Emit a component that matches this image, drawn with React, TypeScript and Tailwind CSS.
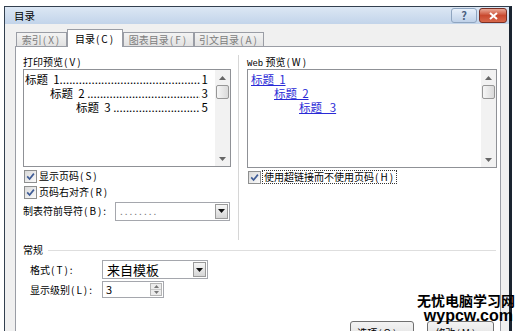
import React from 'react'

const dots = '.'.repeat(90)

const K = ({ k }: { k: string }) => <span className="ml-[1px] tracking-[2px]">({k})</span>

const Check = () => (
  <span className="flex h-[13px] w-[13px] shrink-0 items-center justify-center border border-[#8e8f8f] bg-linear-to-br from-[#d9d9d9] to-[#fbfbfb]">
    <svg width="9" height="9" viewBox="0 0 9 9">
      <path d="M1.2 4.4 L3.6 7 L7.9 1.6" fill="none" stroke="#3f5c96" strokeWidth="1.7" />
    </svg>
  </span>
)

const Arrow = () => (
  <span className="flex h-full w-[13px] shrink-0 items-center justify-center border border-[#9a9a9a] bg-linear-to-b from-[#f6f6f6] to-[#d6d6d6]">
    <svg width="7" height="4" viewBox="0 0 7 4">
      <path d="M0 0h7L3.5 4z" fill="#111" />
    </svg>
  </span>
)

const ScrollBar = () => (
  <div className="flex w-[15px] shrink-0 flex-col items-center bg-[#f2f2f2]">
    <div className="flex h-[15px] items-center justify-center">
      <svg width="7" height="4" viewBox="0 0 7 4">
        <path d="M0 4h7L3.5 0z" fill="#666" />
      </svg>
    </div>
    <div className="h-[14px] w-[13px] rounded-[2px] border border-[#979797] bg-linear-to-r from-[#f6f6f6] to-[#dadada]" />
    <div className="flex-1" />
    <div className="flex h-[15px] items-center justify-center">
      <svg width="7" height="4" viewBox="0 0 7 4">
        <path d="M0 0h7L3.5 4z" fill="#666" />
      </svg>
    </div>
  </div>
)

const Tab = ({ label, k, w }: { label: string; k: string; w: string }) => (
  <div className={`flex h-[14px] items-center justify-center border border-b-0 border-[#9a9da5] bg-linear-to-b from-[#f3f3f3] to-[#e2e2e2] text-[#7d7d7d] ${w}`}>
    {label}
    <K k={k} />
  </div>
)

const Leader = ({ label, n, pad }: { label: string; n: string; pad: string }) => (
  <div className={`flex pr-[7px] ${pad}`}>
    <span className="whitespace-pre">{label}</span>
    <span className="min-w-0 flex-1 overflow-hidden whitespace-nowrap">{dots}</span>
    <span className="pl-[2px]">{n}</span>
  </div>
)

export default function App() {
  return (
    <div className="relative h-[331px] w-[528px] overflow-hidden bg-white pl-[4px] pt-[6px] font-['Noto_Sans_CJK_SC',sans-serif] text-[10px] leading-none text-black">
      <div className="flex h-[330px] w-[508px] flex-col border-l border-t border-r-[3px] border-[#33404f] border-r-[#1a2430] bg-[#f0f0f0]">
        {/* title bar */}
        <div className="flex h-[17px] items-start justify-between bg-linear-to-b from-[#dce7f4] to-[#c2d4ea] pl-[9px] pr-[2px]">
          <span className="text-[10.5px] leading-[17px]">目录</span>
          <div className="mt-[1px] flex gap-[2px]">
            <div className="flex h-[15px] w-[26px] items-center justify-center rounded-[3px] border border-[#8fa5c0] bg-linear-to-b from-[#e8f0fa] to-[#bfd1e8] text-[11px] font-bold text-[#4a6080]">
              ?
            </div>
            <div className="flex h-[15px] w-[28px] items-center justify-center rounded-[3px] border border-[#7a3024] bg-linear-to-b from-[#e9a897] via-[#c9492f] to-[#d8674b]">
              <svg width="9" height="8" viewBox="0 0 9 8">
                <path d="M1 1l7 6M8 1l-7 6" stroke="#fff" strokeWidth="2" />
              </svg>
            </div>
          </div>
        </div>

        <div className="flex-1 pl-[10px] pr-[8px] pt-[5px]">
          {/* tabs */}
          <div className="flex h-[17px] items-end pl-[1px]">
            <Tab label="索引" k="X" w="w-[51px]" />
            <div className="relative z-10 mb-[-1px] flex h-[18px] w-[56px] items-center justify-center border border-b-0 border-[#9a9da5] bg-white">
              目录
              <K k="C" />
            </div>
            <Tab label="图表目录" k="F" w="w-[71px]" />
            <Tab label="引文目录" k="A" w="w-[70px]" />
          </div>

          {/* tab page */}
          <div className="h-[300px] border border-[#9a9da5] bg-white pl-[7px] pr-[2px]">
            <div className="flex h-[193px] pt-[8px]">
              <div className="flex w-[208px] flex-col">
                <div className="h-[14px] leading-[14px]">
                  打印预览
                  <K k="V" />
                </div>
                <div className="flex h-[98px] border border-[#8f9196]">
                  <div className="min-w-0 flex-1 pl-[1px] pt-[2px] text-[11.5px] leading-[14px]">
                    <Leader label="标题  1" n="1" pad="" />
                    <Leader label="标题  2 " n="3" pad="pl-[25px]" />
                    <Leader label="标题  3 " n="5" pad="pl-[51px]" />
                  </div>
                  <ScrollBar />
                </div>
                <div className="mt-[1px] flex h-[16px] items-center gap-[2px] pl-[1px]">
                  <Check />
                  <span>
                    显示页码
                    <K k="S" />
                  </span>
                </div>
                <div className="flex h-[16px] items-center gap-[2px] pl-[1px]">
                  <Check />
                  <span>
                    页码右对齐
                    <K k="R" />
                  </span>
                </div>
                <div className="mt-[1px] flex h-[20px] items-center">
                  <span className="w-[92px]">
                    制表符前导符
                    <K k="B" />:
                  </span>
                  <div className="flex h-[19px] w-[115px] items-center border border-[#a5a7ad] bg-white p-[1px]">
                    <span className="flex-1 pl-[3px] tracking-[2px] text-[#777]">........</span>
                    <Arrow />
                  </div>
                </div>
              </div>

              <div className="ml-[7px] w-px bg-[#d6d6d6]" />

              <div className="ml-[8px] flex w-[250px] flex-col">
                <div className="h-[14px] leading-[14px]">
                  <span className="font-['Liberation_Mono',monospace] text-[9px]">Web</span> 预览
                  <K k="W" />
                </div>
                <div className="flex h-[99px] border border-[#8f9196]">
                  <div className="min-w-0 flex-1 pl-[3px] pt-[2px] text-[11.5px] leading-[14px] text-[#2a2ad6]">
                    <div className="whitespace-pre underline">标题  1</div>
                    <div className="whitespace-pre pl-[23px] underline">标题  2</div>
                    <div className="whitespace-pre pl-[48px] underline">标题   3</div>
                  </div>
                  <ScrollBar />
                </div>
                <div className="mt-[1px] flex h-[16px] items-center gap-[1px] pl-[1px]">
                  <Check />
                  <span className="border border-dotted border-[#333] px-[1px] py-[1px]">
                    使用超链接而不使用页码
                    <K k="H" />
                  </span>
                </div>
              </div>
            </div>

            {/* 常规 */}
            <div className="mt-[3px] flex h-[14px] items-center">
              <span>常规</span>
              <span className="ml-[5px] mr-[2px] h-px flex-1 bg-[#dedede]" />
            </div>
            <div className="mt-[3px] flex h-[19px] items-center pl-[7px]">
              <span className="w-[72px]">
                格式
                <K k="T" />:
              </span>
              <div className="flex h-[19px] w-[106px] items-center border border-[#a5a7ad] bg-white p-[1px]">
                <span className="flex-1 pl-[3px] text-[13px]">来自模板</span>
                <Arrow />
              </div>
            </div>
            <div className="mt-[2px] flex h-[17px] items-center pl-[7px]">
              <span className="w-[72px]">
                显示级别
                <K k="L" />:
              </span>
              <div className="flex h-[17px] w-[62px] items-center border border-[#a5a7ad] bg-white p-[1px]">
                <span className="flex-1 pl-[2px] text-[11px]">3</span>
                <div className="flex h-full w-[12px] flex-col border border-[#b5b5b5] bg-[#ececec]">
                  <div className="flex flex-1 items-center justify-center border-b border-[#c8c8c8]">
                    <svg width="5" height="3" viewBox="0 0 5 3">
                      <path d="M0 3h5L2.5 0z" fill="#777" />
                    </svg>
                  </div>
                  <div className="flex flex-1 items-center justify-center">
                    <svg width="5" height="3" viewBox="0 0 5 3">
                      <path d="M0 0h5L2.5 3z" fill="#777" />
                    </svg>
                  </div>
                </div>
              </div>
            </div>

            {/* buttons */}
            <div className="mt-[23px] flex justify-end gap-[13px] pr-[4px]">
              <div className="flex h-[23px] w-[64px] items-center justify-center rounded-[3px] border border-[#707070] bg-linear-to-b from-[#f3f3f3] to-[#dcdcdc]">
                选项
                <K k="O" />...
              </div>
              <div className="flex h-[23px] w-[67px] items-center justify-center rounded-[3px] border border-[#707070] bg-linear-to-b from-[#f3f3f3] to-[#dcdcdc]">
                修改
                <K k="M" />...
              </div>
            </div>
          </div>
        </div>
      </div>

      {/* watermark */}
      <div className="absolute left-[417px] top-[292px] flex flex-col items-end">
        <span className="text-[14px] font-bold leading-[16px]">无忧电脑学习网</span>
        <span className="mr-[2px] font-['Liberation_Sans',sans-serif] text-[16px] font-bold leading-[16px]">wypcw.com</span>
      </div>
    </div>
  )
}
